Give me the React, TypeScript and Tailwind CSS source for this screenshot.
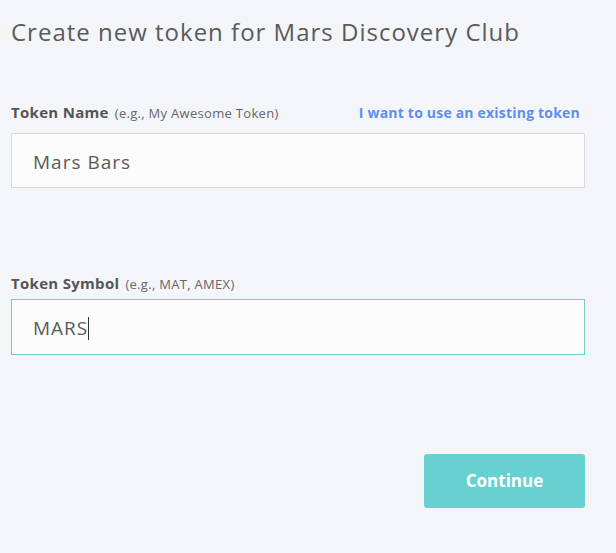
export default function App() {
    return (
        <div
            className="w-[616px] h-[553px] bg-[#f4f5f9] text-[#5c5c5c] overflow-hidden"
            style={{ fontFamily: "'Open Sans', Lato, sans-serif" }}
        >
            <div className="pl-[11px] pr-[31px] pt-[15px]">
                <h1 className="text-[24px] leading-[34px] tracking-[1px] font-normal text-[#5a5a5a]">
                    Create new token for Mars Discovery Club
                </h1>

                {/* Token name */}
                <div className="mt-[54px] flex items-end justify-between h-[20px]">
                    <div className="flex items-baseline gap-[6px]">
                        <span className="text-[15px] tracking-[0.3px] font-bold text-[#555]">
                            Token Name
                        </span>
                        <span className="text-[13px] tracking-[0.3px] text-[#666]">
                            (e.g., My Awesome Token)
                        </span>
                    </div>
                    <span className="text-[14px] tracking-[0.2px] font-bold text-[#5b8ff2] mr-[5px]">
                        I want to use an existing token
                    </span>
                </div>
                <div className="mt-[10px] h-[55px] border border-[#d8d8d8] bg-[#fcfcfc] flex items-center pl-[21px] pt-[3px] text-[19px] tracking-[1px] text-[#5a5a5a]">
                    Mars Bars
                </div>

                {/* Token symbol */}
                <div className="mt-[84px] flex items-baseline gap-[6px] h-[20px]">
                    <span className="text-[15px] tracking-[0.3px] font-bold text-[#555]">
                        Token Symbol
                    </span>
                    <span className="text-[13px] tracking-[0.3px] text-[#666]">
                        (e.g., MAT, AMEX)
                    </span>
                </div>
                <div className="mt-[7px] h-[56px] border border-[#72cccc] bg-[#fcfcfc] flex items-center pl-[21px] pt-[3px] text-[19px] tracking-[1px] text-[#5a5a5a]">
                    MARS
                    <span className="inline-block w-px h-[23px] bg-[#333]" />
                </div>

                <div className="mt-[99px] flex justify-end">
                    <button className="w-[161px] h-[54px] rounded-[3px] bg-[#67d1d1] text-white text-[17px] font-bold">
                        Continue
                    </button>
                </div>
            </div>
        </div>
    );
}
